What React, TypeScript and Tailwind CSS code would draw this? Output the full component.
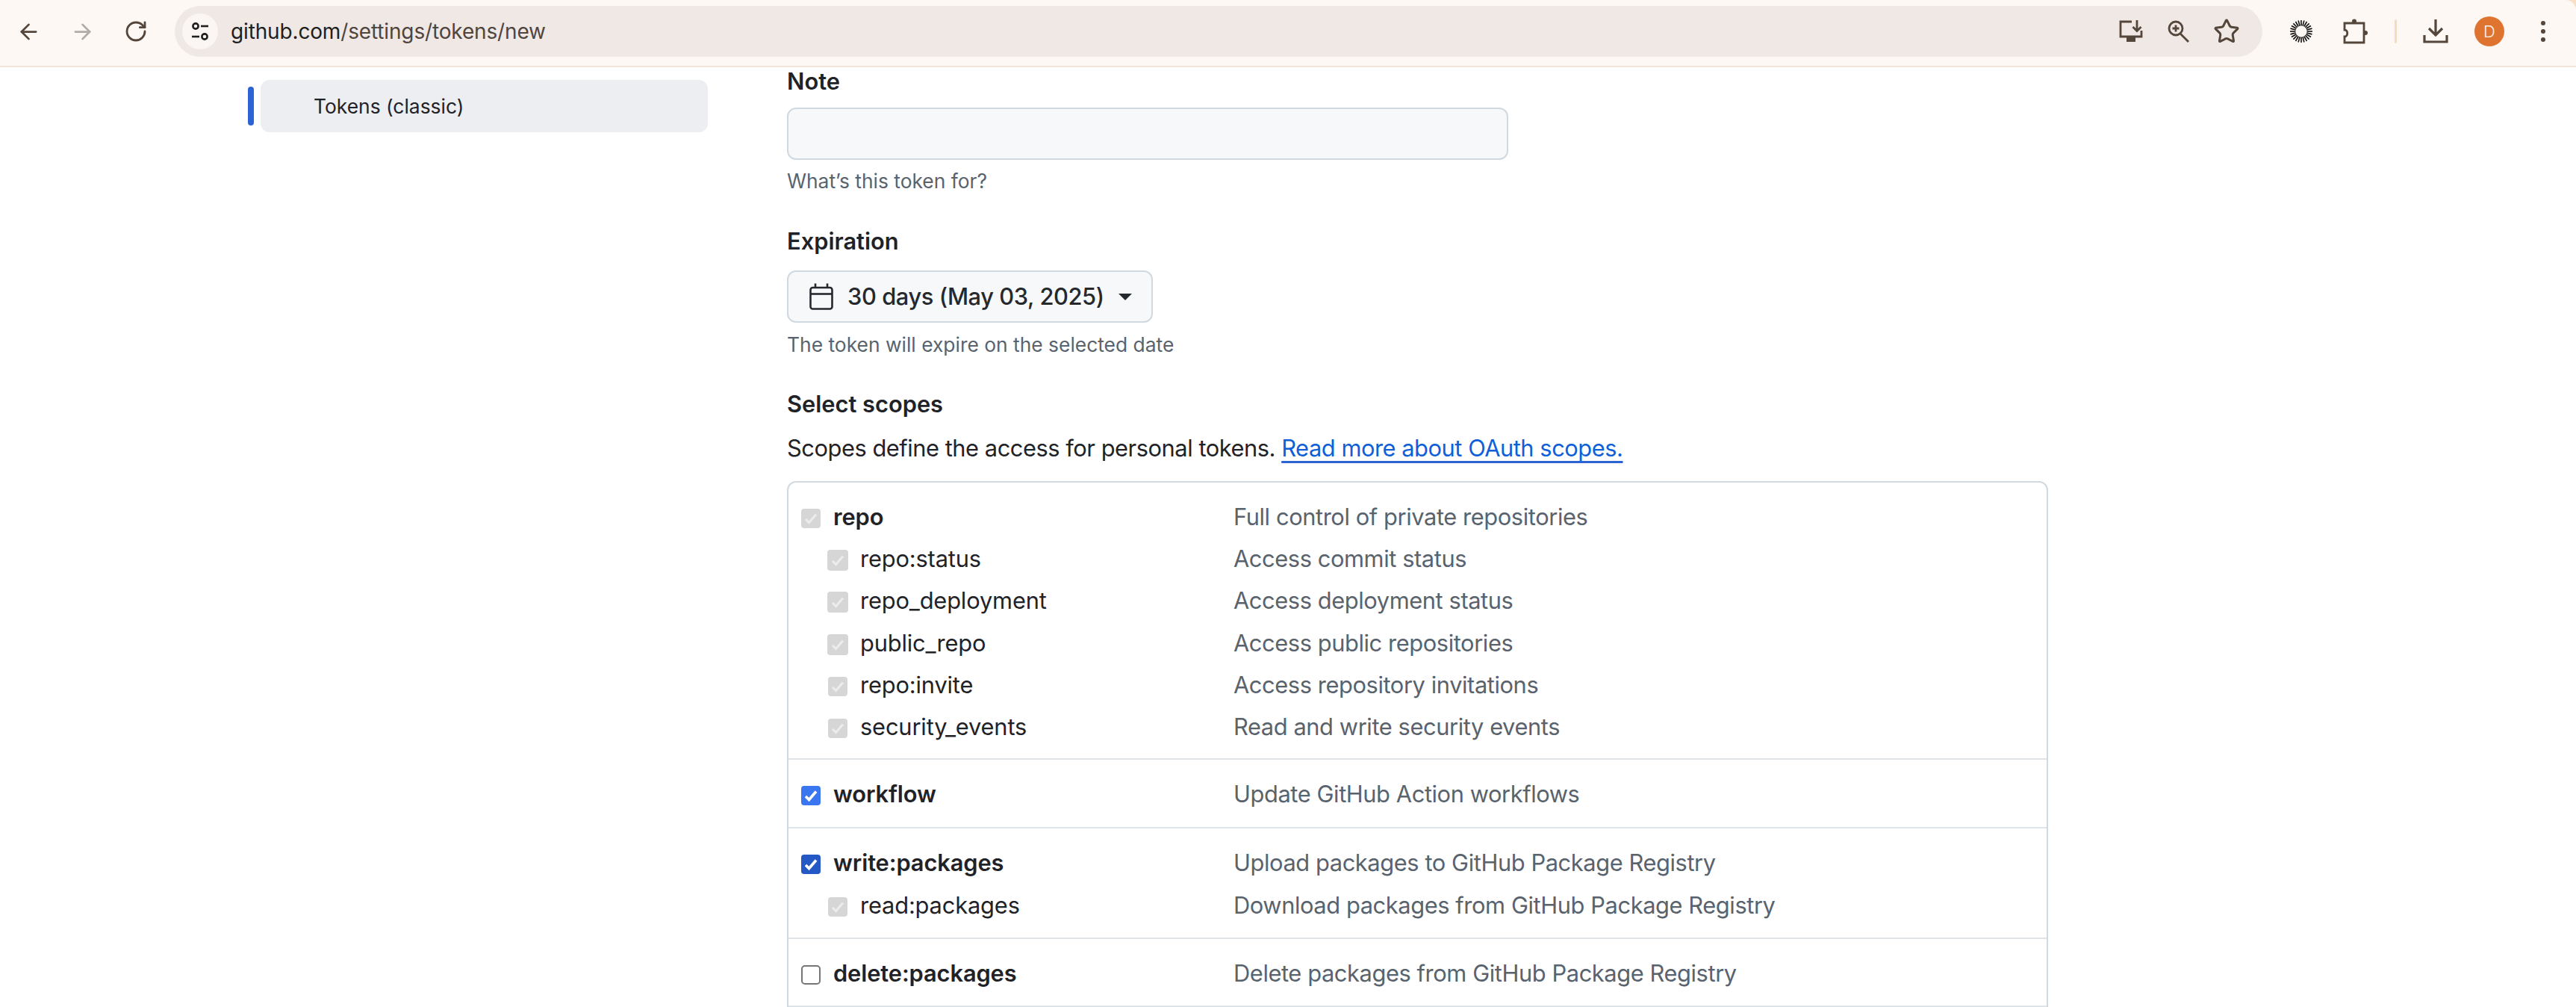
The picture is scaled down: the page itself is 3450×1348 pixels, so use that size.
import React from 'react';
import { ArrowLeft, ArrowRight, RotateCw, Star } from 'lucide-react';

type Scope = { name: string; desc: string; state: 'disabled' | 'checked' | 'focused' | 'empty'; large?: boolean };
type Group = { parent: Scope; children: Scope[] };

const groups: Group[] = [
    {
        parent: { name: 'repo', desc: 'Full control of private repositories', state: 'disabled' },
        children: [
            { name: 'repo:status', desc: 'Access commit status', state: 'disabled', large: true },
            { name: 'repo_deployment', desc: 'Access deployment status', state: 'disabled', large: true },
            { name: 'public_repo', desc: 'Access public repositories', state: 'disabled', large: true },
            { name: 'repo:invite', desc: 'Access repository invitations', state: 'disabled' },
            { name: 'security_events', desc: 'Read and write security events', state: 'disabled' },
        ],
    },
    {
        parent: { name: 'workflow', desc: 'Update GitHub Action workflows', state: 'checked' },
        children: [],
    },
    {
        parent: { name: 'write:packages', desc: 'Upload packages to GitHub Package Registry', state: 'focused' },
        children: [{ name: 'read:packages', desc: 'Download packages from GitHub Package Registry', state: 'disabled' }],
    },
    {
        parent: { name: 'delete:packages', desc: 'Delete packages from GitHub Package Registry', state: 'empty' },
        children: [],
    },
];

const Tick = ({ color, width }: { color: string; width: number }) => (
    <svg width="26" height="26" viewBox="0 0 26 26" fill="none" stroke={color} strokeWidth={width}>
        <path d="M6 14 L10.500 18.500 L20 7.500" />
    </svg>
);

const Checkbox = ({ state, large }: { state: Scope['state']; large?: boolean }) => {
    if (state === 'disabled') {
        return (
            <span
                className={
                    large
                        ? 'mt-[4px] flex h-[28px] w-[28px] shrink-0 items-center justify-center rounded-[4px] bg-[#d6d6d6]'
                        : 'mt-[4px] flex h-[26px] w-[26px] shrink-0 items-center justify-center rounded-[4px] bg-[#d6d6d6]'
                }
            >
                <Tick color="#ececec" width={3} />
            </span>
        );
    }
    if (state === 'checked') {
        return (
            <span className="mt-[4px] flex h-[26px] w-[26px] shrink-0 items-center justify-center rounded-[4px] bg-[#3a76f0]">
                <Tick color="#ffffff" width={3.6} />
            </span>
        );
    }
    if (state === 'focused') {
        return (
            <span className="mt-[4px] flex h-[26px] w-[26px] shrink-0 items-center justify-center rounded-[4px] bg-[#2458c4]">
                <Tick color="#ffffff" width={3.6} />
            </span>
        );
    }
    return <span className="mt-[4px] h-[26px] w-[26px] shrink-0 rounded-[5px] border-2 border-[#767676] bg-white" />;
};

const ScopeRow = ({ scope, child }: { scope: Scope; child?: boolean }) => (
    <div className="flex h-[56.2px] items-center">
        <div className={child ? (scope.large ? 'flex w-[579px] items-center pl-[35px]' : 'flex w-[579px] items-center pl-[36px]') : 'flex w-[579px] items-center'}>
            <Checkbox state={scope.state} large={scope.large} />
            {child ? (
                <span className={scope.large ? 'ml-[16px] tracking-[-0.15px] text-[#1f2328]' : 'ml-[17px] tracking-[-0.15px] text-[#1f2328]'}>{scope.name}</span>
            ) : (
                <span className="ml-[17px] font-semibold tracking-[-0.1px] text-[#1f2328]">{scope.name}</span>
            )}
        </div>
        <span className="tracking-[-0.4px] text-[#59636e]">{scope.desc}</span>
    </div>
);

const Burst = () => (
    <svg width="32" height="32" viewBox="0 0 32 32" stroke="#111111" strokeWidth="1.6">
        {Array.from({ length: 24 }).map((_, i) => (
            <line key={i} x1="16" y1="1" x2="16" y2="8.500" transform={`rotate(${(i * 360) / 24} 16 16)`} />
        ))}
    </svg>
);

const toolbarIcon = '#54463a';

const App = () => {
    return (
        <div className="h-[1348px] w-[3450px] overflow-hidden bg-white font-['Inter',sans-serif] text-[30.8px] text-[#1f2328]">
            {/* Browser toolbar */}
            <div className="bg-[#f8e0c6]">
                <div className="flex h-[90px] items-start rounded-tr-[14px] border-b-2 border-[#f3e4d9] bg-[#fdf8f4] pl-[2px] pr-[8px] pt-[8px]">
                    <div className="flex h-[68px] w-[72px] items-center justify-center text-[#54463a]">
                        <ArrowLeft size={33} strokeWidth={2} />
                    </div>
                    <div className="flex h-[68px] w-[72px] items-center justify-center text-[#b3aca6]">
                        <ArrowRight size={33} strokeWidth={2} />
                    </div>
                    <div className="flex h-[68px] w-[72px] items-center justify-center text-[#54463a]">
                        <RotateCw size={32} strokeWidth={2.1} />
                    </div>
                    <div className="ml-[16px] flex h-[68px] flex-1 items-center rounded-full bg-[#f0e8e4] pl-[10px] pr-[16px]">
                        <div className="flex h-[48px] w-[48px] items-center justify-center rounded-full bg-[#fbf6f3]">
                            <svg width="26" height="28" viewBox="0 0 26 28" fill="none" stroke="#1f1f1f" strokeWidth="2.6">
                                <circle cx="7" cy="7" r="3.600" />
                                <path d="M14 7 H24" />
                                <circle cx="19" cy="21" r="3.600" />
                                <path d="M2 21 H12" />
                            </svg>
                        </div>
                        <div className="ml-[17px] flex-1 text-[28px] tracking-[-0.15px] text-[#4f453f]">
                            <span className="text-[#1f1f1f]">github.com</span>/settings/tokens/new
                        </div>
                        <div className="flex h-[64px] w-[64px] items-center justify-center">
                            <svg width="34" height="30" viewBox="0 0 34 30" fill="none" stroke={toolbarIcon} strokeWidth="2.8">
                                <path d="M18 2 H3 V22 H31 V14" />
                                <path d="M25 0 V14 M19.500 9 L25 14.500 L30.500 9" />
                                <path d="M11 23 H23 V29 H11 Z" fill={toolbarIcon} stroke="none" />
                            </svg>
                        </div>
                        <div className="flex h-[64px] w-[64px] items-center justify-center">
                            <svg width="30" height="30" viewBox="0 0 30 30" fill="none" stroke={toolbarIcon} strokeWidth="2.8">
                                <circle cx="11" cy="11" r="9" />
                                <path d="M17 18 L28 29" />
                                <path d="M6.500 11 H15.500 M11 6.500 V15.500" />
                            </svg>
                        </div>
                        <div className="flex h-[64px] w-[64px] items-center justify-center text-[#54463a]">
                            <Star size={36} strokeWidth={2} />
                        </div>
                    </div>
                    <div className="ml-[16px] flex h-[68px] w-[72px] items-center justify-center">
                        <Burst />
                    </div>
                    <div className="flex h-[68px] w-[72px] items-center justify-center">
                        <svg width="34" height="34" viewBox="0 0 34 34" fill="none" stroke={toolbarIcon} strokeWidth="2.8">
                            <path d="M3 6 H29 V32 H3 V24 C8 24 8 15 3 15 V6 Z" />
                            <circle cx="16" cy="3.500" r="3" fill={toolbarIcon} stroke="none" />
                            <circle cx="31" cy="19" r="3" fill={toolbarIcon} stroke="none" />
                        </svg>
                    </div>
                    <div className="flex h-[68px] w-[36px] items-center justify-center">
                        <div className="h-[32px] w-[3px] rounded-full bg-[#f6dcbd]" />
                    </div>
                    <div className="flex h-[68px] w-[72px] items-center justify-center">
                        <svg width="34" height="32" viewBox="0 0 34 32" fill="none" stroke={toolbarIcon} strokeWidth="3.2">
                            <path d="M17 0 V20 M8 12 L17 21 L26 12" />
                            <path d="M2 21 V30 H32 V21" />
                        </svg>
                    </div>
                    <div className="flex h-[68px] w-[72px] items-center justify-center">
                        <div className="flex h-[40px] w-[40px] items-center justify-center rounded-full bg-[#df7430] text-[22px] font-light text-[#fdf0e6]">D</div>
                    </div>
                    <div className="flex h-[68px] w-[72px] flex-col items-center justify-center gap-[5px]">
                        <div className="h-[6px] w-[6px] rounded-full bg-[#54463a]" />
                        <div className="h-[6px] w-[6px] rounded-full bg-[#54463a]" />
                        <div className="h-[6px] w-[6px] rounded-full bg-[#54463a]" />
                    </div>
                </div>
            </div>

            <div className="flex">
                {/* Sidebar */}
                <div className="flex w-[1054px] shrink-0 items-start pl-[332px] pt-[17px]">
                    <div className="mt-[9px] h-[52px] w-[8px] rounded-full bg-[#2b63d4]" />
                    <div className="ml-[9px] flex h-[70px] w-[599px] items-center rounded-[12px] bg-[#eceef1] pl-[71px] pt-[2px] text-[26.4px] text-[#1f2328]">
                        Tokens (classic)
                    </div>
                </div>

                {/* Form */}
                <div className="w-[1689px]">
                    <div className="h-[38px] font-semibold leading-[38px]">Note</div>
                    <div className="mt-[16px] h-[70px] w-[966px] rounded-[12px] border-2 border-[#d1d9e0] bg-[#f6f8fa]" />
                    <div className="mt-[10px] h-[36px] text-[26.4px] leading-[36px] text-[#59636e]">What’s this token for?</div>

                    <div className="mt-[44px] h-[38px] font-semibold leading-[38px]">Expiration</div>
                    <div className="mt-[20px] flex h-[70px] w-[490px] items-center rounded-[12px] border-2 border-[#d1d9e0] bg-[#f6f8fa] pl-[28px]">
                        <svg width="32" height="36" viewBox="0 0 32 36" fill="none" stroke="#25292e" strokeWidth="2.6">
                            <rect x="1.500" y="6" width="29" height="28.500" rx="3" />
                            <path d="M1.500 14.500 H30.500" />
                            <path d="M8 0.500 V6 M24 0.500 V6" />
                        </svg>
                        <span className="ml-[19px] font-medium tracking-[-0.4px] text-[#25292e]">30 days (May 03, 2025)</span>
                        <span className="ml-[19px] h-0 w-0 border-x-[9px] border-t-[9px] border-x-transparent border-t-[#25292e]" />
                    </div>
                    <div className="mt-[11px] h-[36px] text-[26.4px] leading-[36px] text-[#59636e]">The token will expire on the selected date</div>

                    <div className="mt-[43px] h-[38px] font-semibold leading-[38px]">Select scopes</div>
                    <div className="mt-[18px] h-[44px] leading-[44px] tracking-[-0.45px]">
                        Scopes define the access for personal tokens.{' '}
                        <span className="text-[#0f5fd8] underline decoration-[#2b63d4] decoration-[3px] underline-offset-[6px]">Read more about OAuth scopes.</span>
                    </div>

                    <div className="mt-[22px] h-[760px] rounded-[12px] border-2 border-[#d1d9e0]">
                        {groups.map((group) => (
                            <div key={group.parent.name} className="border-b-2 border-[#dfe4e9] pb-[15px] pl-[17px] pt-[18px] first:pb-[14px] nth-2:pb-[16px]">
                                <ScopeRow scope={group.parent} />
                                {group.children.map((scope) => (
                                    <ScopeRow key={scope.name} scope={scope} child />
                                ))}
                            </div>
                        ))}
                    </div>
                </div>
            </div>
        </div>
    );
};

export default App;
